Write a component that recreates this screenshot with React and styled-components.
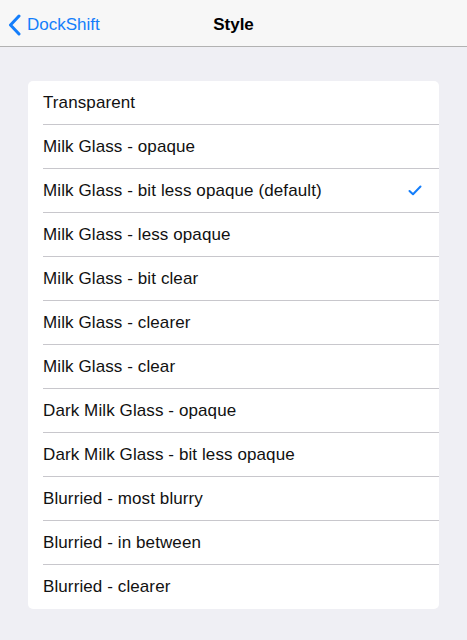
import React from 'react';
import styled, { createGlobalStyle } from 'styled-components';

const options = [
  'Transparent',
  'Milk Glass - opaque',
  'Milk Glass - bit less opaque (default)',
  'Milk Glass - less opaque',
  'Milk Glass - bit clear',
  'Milk Glass - clearer',
  'Milk Glass - clear',
  'Dark Milk Glass - opaque',
  'Dark Milk Glass - bit less opaque',
  'Blurried - most blurry',
  'Blurried - in between',
  'Blurried - clearer',
];

const selected = 2;

export default function App() {
  return (
    <>
      <Global />
      <Page>
        <NavBar>
          <Back>
            <svg width="13" height="22" viewBox="0 0 13 22">
              <path d="M11 2 L2.5 11 L11 20" fill="none" stroke="#147efb" strokeWidth="3" strokeLinecap="round" strokeLinejoin="round" />
            </svg>
            <span>DockShift</span>
          </Back>
          <Title>Style</Title>
        </NavBar>
        <Content>
          <Card>
            {options.map((label, i) => (
              <Row key={label} $last={i === options.length - 1}>
                <Label>{label}</Label>
                {i === selected && (
                  <svg width="14" height="11" viewBox="0 0 14 11">
                    <path d="M1.5 6 L5 9.3 L12.5 1.5" fill="none" stroke="#147efb" strokeWidth="2" strokeLinecap="round" strokeLinejoin="round" />
                  </svg>
                )}
              </Row>
            ))}
          </Card>
        </Content>
      </Page>
    </>
  );
}

const Global = createGlobalStyle`
  html, body {
    margin: 0;
    padding: 0;
    background: #efeff4;
    font-family: "Liberation Sans", Arial, sans-serif;
  }
`;

const Page = styled.div`
  width: 467px;
  height: 640px;
  background: #efeff4;
  display: flex;
  flex-direction: column;
`;

const NavBar = styled.header`
  height: 47px;
  box-sizing: border-box;
  padding-top: 3px;
  background: #f7f7f7;
  border-bottom: 1px solid #b2b2b2;
  display: flex;
  align-items: center;
  justify-content: center;
  position: relative;
  flex-shrink: 0;
`;

const Back = styled.div`
  position: absolute;
  left: 8px;
  top: 3px;
  bottom: 0;
  display: flex;
  align-items: center;
  gap: 6px;
  color: #147efb;
  font-size: 17px;

  svg {
    margin-top: 1px;
  }
`;

const Title = styled.div`
  font-size: 17px;
  font-weight: bold;
  color: #000;
`;

const Content = styled.main`
  padding: 34px 28px 0;
`;

const Card = styled.div`
  background: #fff;
  border-radius: 5px;
  overflow: hidden;
`;

const Row = styled.div`
  height: 44px;
  box-sizing: border-box;
  margin-left: 15px;
  padding-right: 17px;
  display: flex;
  align-items: center;
  justify-content: space-between;
  border-bottom: ${(p) => (p.$last ? 'none' : '1px solid #c8c7cc')};
`;

const Label = styled.span`
  font-size: 17px;
  letter-spacing: 0.1px;
  color: #111;
`;
